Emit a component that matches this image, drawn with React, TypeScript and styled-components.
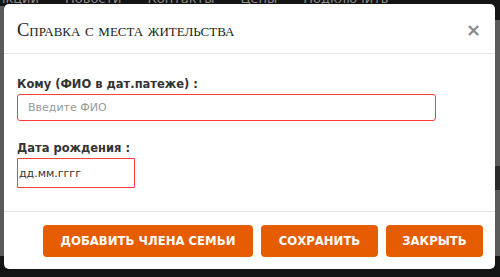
import styled, { createGlobalStyle } from "styled-components";

const GlobalStyle = createGlobalStyle`
  html, body {
    margin: 0;
    padding: 0;
    background: #141414;
  }
  * {
    box-sizing: border-box;
  }
`;

const App = () => {
  return (
    <>
      <GlobalStyle />
      <Page>
        <Nav>
          <span>Функции</span>
          <span>Новости</span>
          <span>Контакты</span>
          <span>Цены</span>
          <span>Подключить</span>
        </Nav>
        <Sides>
          <div className="left" />
          <div className="right" />
        </Sides>
        <Overlay>
          <Modal>
            <Header>
              <Title>Справка с места жительства</Title>
              <CloseButton aria-label="close">×</CloseButton>
            </Header>
            <Body>
              <Field>
                <Label>Кому (ФИО в дат.патеже) :</Label>
                <TextInput placeholder="Введите ФИО" />
              </Field>
              <Field>
                <Label>Дата рождения :</Label>
                <DateInput>дд.мм.гггг</DateInput>
              </Field>
            </Body>
            <Footer>
              <OrangeButton $width={210}>Добавить члена семьи</OrangeButton>
              <OrangeButton $width={117}>Сохранить</OrangeButton>
              <OrangeButton $width={97}>Закрыть</OrangeButton>
            </Footer>
          </Modal>
        </Overlay>
      </Page>
    </>
  );
};

export default App;

const Page = styled.div`
  position: relative;
  width: 500px;
  height: 277px;
  overflow: hidden;
  background: #141414;
`;

// the site's menu peeking out behind the dimmed backdrop
const Nav = styled.div`
  display: flex;
  gap: 26px;
  margin-top: -9px;
  margin-left: -22px;
  font-family: "DejaVu Sans", Verdana, sans-serif;
  font-size: 13px;
  color: #8a8a8a;
`;

const Sides = styled.div`
  display: flex;
  justify-content: space-between;
  height: 250px;
  .left {
    width: 4px;
    background: #5a5a5a;
  }
  .right {
    width: 5px;
    margin-top: 14px;
    background: linear-gradient(#5a5a5a 0 62%, #2a2a2a 62% 72%, #5a5a5a 72%);
  }
`;

const Overlay = styled.div`
  position: absolute;
  inset: 0;
  padding: 4px 5px 8px 4px;
`;

const Modal = styled.div`
  display: flex;
  flex-direction: column;
  height: 100%;
  background: #fff;
  border-radius: 5px;
`;

const Header = styled.div`
  display: flex;
  align-items: center;
  justify-content: space-between;
  height: 50px;
  padding: 3px 14px 0 13px;
  border-bottom: 1px solid #e5e5e5;
`;

const Title = styled.h4`
  margin: 0;
  font-family: "Liberation Serif", "Times New Roman", serif;
  font-variant: small-caps;
  font-weight: normal;
  font-size: 18.5px;
  color: #222;
`;

const CloseButton = styled.button`
  border: none;
  background: none;
  padding: 0;
  font-family: "DejaVu Sans", Arial, sans-serif;
  font-weight: bold;
  font-size: 18px;
  line-height: 1;
  color: #888;
  cursor: pointer;
`;

const Body = styled.div`
  display: flex;
  flex-direction: column;
  gap: 20px;
  padding: 23px 13px 0;
  flex: 1;
  border-bottom: 1px solid #e5e5e5;
`;

const Field = styled.div`
  display: flex;
  flex-direction: column;
  gap: 3px;
`;

const Label = styled.label`
  font-family: "DejaVu Sans", Verdana, sans-serif;
  font-weight: bold;
  font-size: 11.5px;
  color: #333;
`;

const TextInput = styled.input`
  width: 419px;
  height: 27px;
  padding: 0 10px;
  border: 1px solid #ff3b3b;
  border-radius: 3px;
  font-family: "DejaVu Sans", Verdana, sans-serif;
  font-size: 11px;
  outline: none;
  &::placeholder {
    color: #999;
  }
`;

const DateInput = styled.div`
  display: flex;
  align-items: center;
  width: 118px;
  height: 30px;
  padding: 0 1px;
  border: 1px solid #ff3b3b;
  border-radius: 1px;
  font-family: "DejaVu Sans", Verdana, sans-serif;
  font-size: 11px;
  color: #333;
`;

const Footer = styled.div`
  display: flex;
  justify-content: flex-end;
  align-items: center;
  gap: 8px;
  height: 57px;
  padding: 0 12px 0 0;
`;

const OrangeButton = styled.button<{ $width: number }>`
  width: ${(p) => p.$width}px;
  height: 32px;
  border: none;
  border-radius: 4px;
  background: #e65c00;
  color: #fff;
  font-family: "DejaVu Sans", Verdana, sans-serif;
  font-weight: bold;
  font-size: 11.7px;
  text-transform: uppercase;
  cursor: pointer;
`;
